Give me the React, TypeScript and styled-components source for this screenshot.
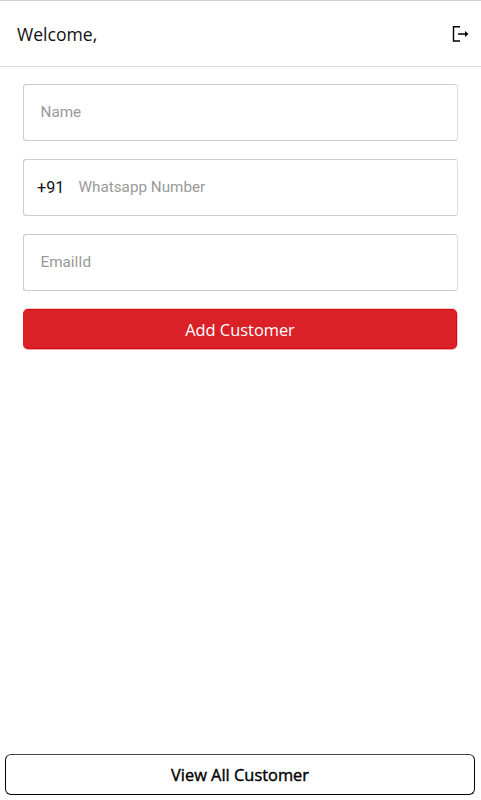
import React from "react";
import styled, { createGlobalStyle } from "styled-components";

const GlobalStyle = createGlobalStyle`
  * { box-sizing: border-box; }
  body { margin: 0; background: #fff; }
`;

const Screen = styled.div`
  display: flex;
  flex-direction: column;
  height: 100vh;
  background: #fff;
  font-family: "Open Sans", sans-serif;
  color: #000;
`;

const Header = styled.header`
  display: flex;
  align-items: center;
  justify-content: space-between;
  height: 67px;
  padding: 0 12px 0 17px;
  border-top: 1px solid #cfcfcf;
  border-bottom: 1px solid #dcdcdc;
`;

const Greeting = styled.h1`
  margin: 0;
  font-size: 17.6px;
  line-height: 24px;
  font-weight: 400;
  color: #111;
`;

const LogoutButton = styled.button`
  display: flex;
  padding: 0;
  border: 0;
  background: none;
  color: #000;
`;

const Form = styled.form`
  display: flex;
  flex: 1;
  flex-direction: column;
  gap: 18px;
  padding: 17px 23px 0;
`;

const Field = styled.label`
  display: flex;
  align-items: center;
  height: 57px;
  width: 435px;
  padding: 0 13px;
  border: 1px solid #ccc;
  border-right-color: #dedede;
  border-radius: 3px;
`;

const Prefix = styled.span`
  width: 38px;
  padding-top: 1px;
  font: 400 16.2px/20px Roboto, sans-serif;
  color: #111;
`;

const Input = styled.input`
  flex: 1;
  min-width: 0;
  height: 20px;
  margin: 0 0 2px;
  padding: 0 0 0 3.5px;
  border: 0;
  outline: 0;
  background: transparent;
  font: 400 15.25px/20px Roboto, sans-serif;
  &::placeholder { color: #999; opacity: 1; }
`;

const SubmitButton = styled.button`
  width: 434px;
  height: 40px;
  padding: 2px 0 0;
  border: 1px solid #d60c12;
  border-left-color: #da2128;
  border-radius: 5px;
  background: #da2128;
  box-shadow: 0 -1px #f6c8c8, 0 1px #f0a8a8, 1px 0 #f6c8c8;
  color: #fff;
  font: 400 16.4px/24px "Open Sans", sans-serif;
`;

const Footer = styled.footer`
  display: flex;
  padding: 0 6px 5px 5px;
`;

const ViewAllButton = styled.button`
  flex: 1;
  height: 41px;
  padding: 0;
  border: 1px solid #000;
  border-top-color: #444;
  border-radius: 6px;
  background: #fff;
  color: #000;
  font: 400 16.4px/24px "Open Sans", sans-serif;
  -webkit-text-stroke: 0.4px #000;
`;

const LogoutIcon = () => (
  <svg width="17" height="16" viewBox="0 0 17 16" fill="none">
    <path d="M8 0.8H1.5V15H8" stroke="currentColor" strokeWidth="1.4" />
    <path d="M6 8H14" stroke="currentColor" strokeWidth="1.5" />
    <path d="M13 4.9L16.5 8L13 11.1Z" fill="currentColor" />
  </svg>
);

export default function App() {
  return (
    <Screen>
      <GlobalStyle />
      <Header>
        <Greeting>Welcome,</Greeting>
        <LogoutButton type="button" aria-label="Log out">
          <LogoutIcon />
        </LogoutButton>
      </Header>
      <Form>
        <Field>
          <Input placeholder="Name" />
        </Field>
        <Field>
          <Prefix>+91</Prefix>
          <Input placeholder="Whatsapp Number" type="tel" />
        </Field>
        <Field>
          <Input placeholder="EmailId" type="email" />
        </Field>
        <SubmitButton type="button">Add Customer</SubmitButton>
      </Form>
      <Footer>
        <ViewAllButton type="button">View All Customer</ViewAllButton>
      </Footer>
    </Screen>
  );
}
